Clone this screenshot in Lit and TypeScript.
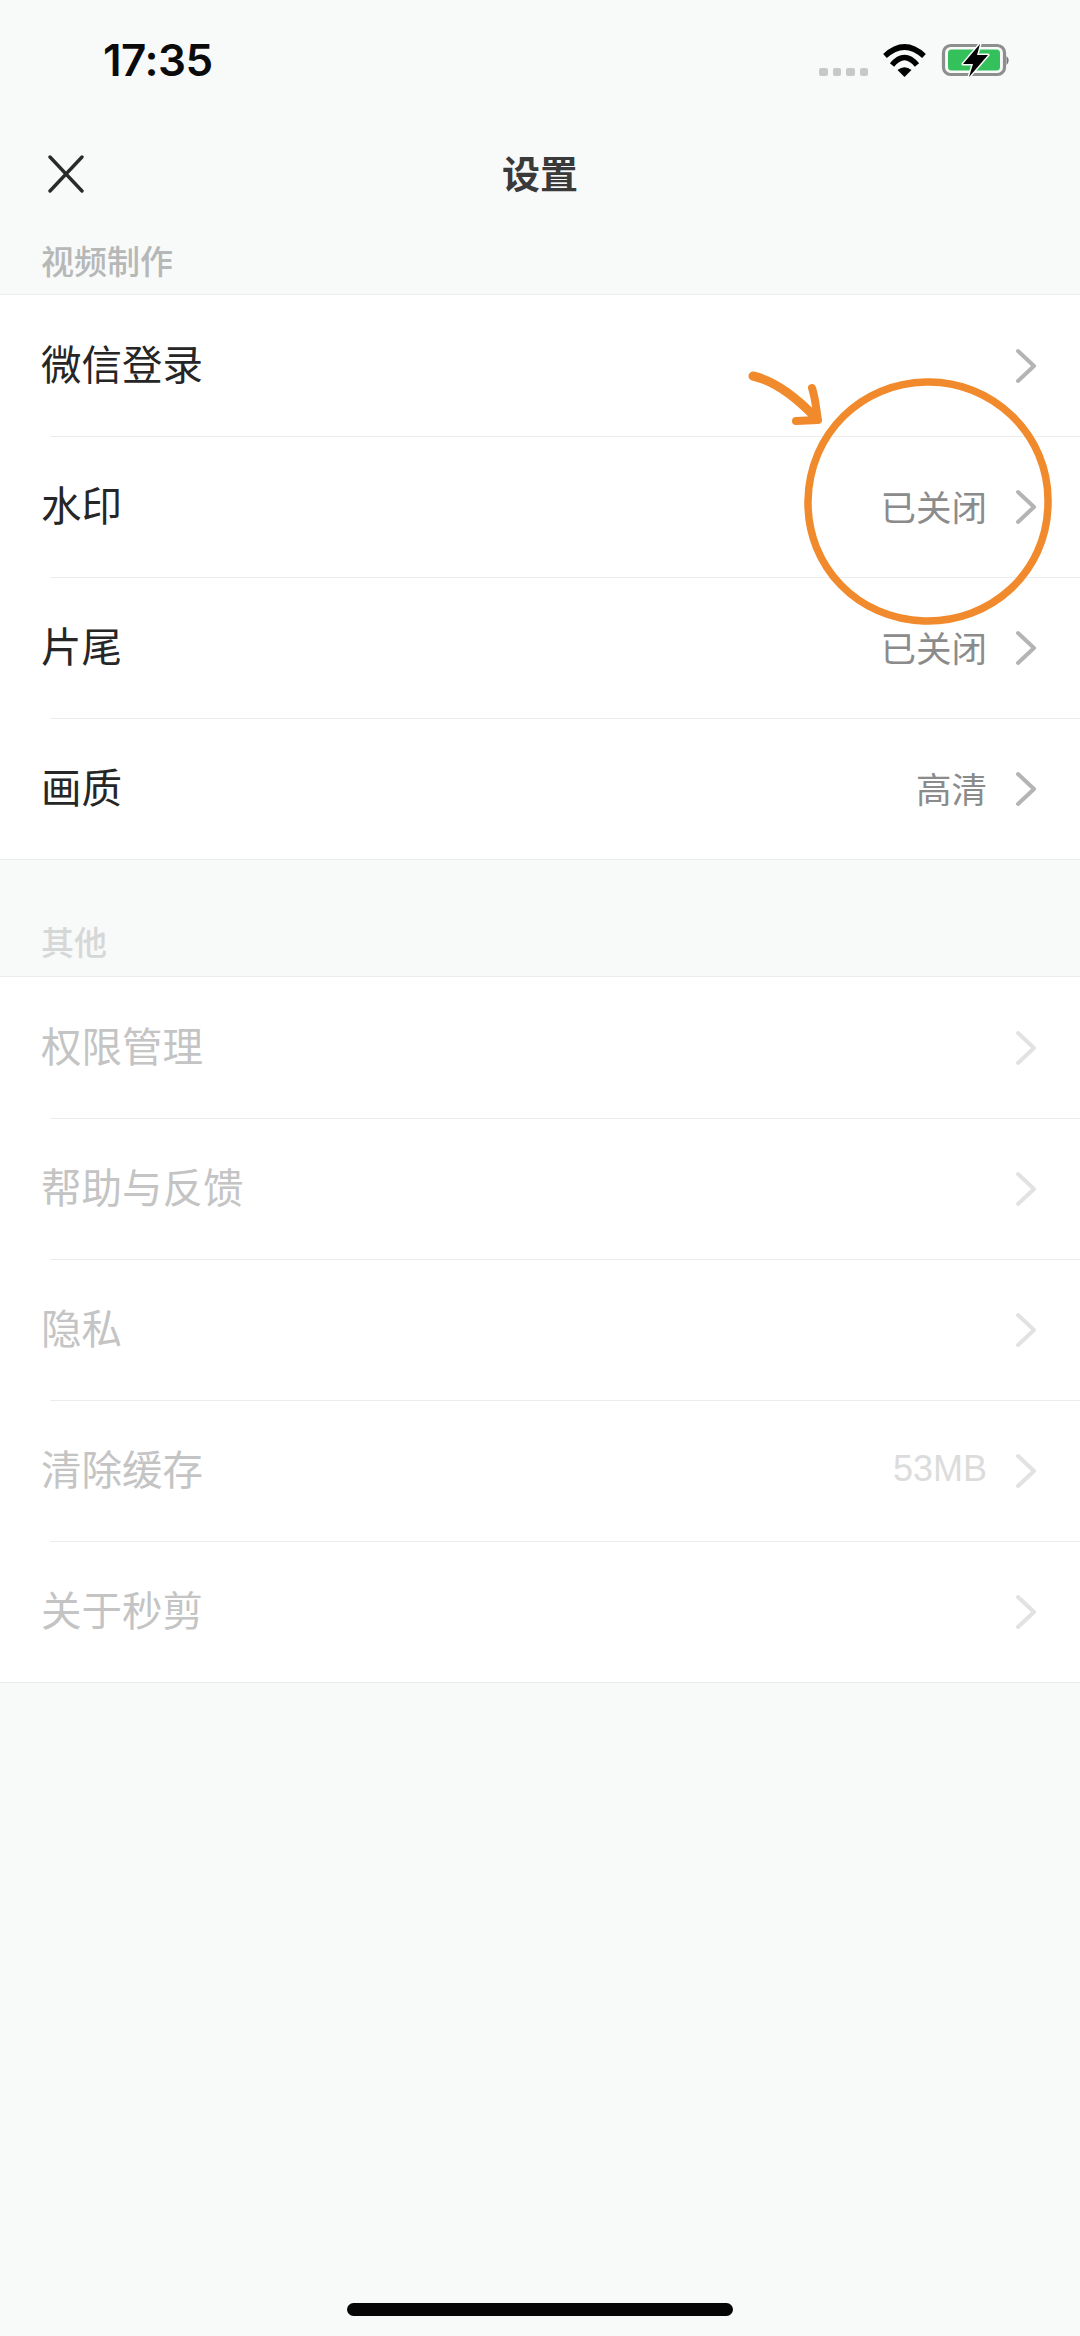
import { LitElement, html, css, svg } from "lit";
import { customElement } from "lit/decorators.js";

interface Row { label: string; value?: string }

const video: Row[] = [
  { label: "微信登录" },
  { label: "水印", value: "已关闭" },
  { label: "片尾", value: "已关闭" },
  { label: "画质", value: "高清" },
];
const other: Row[] = [
  { label: "权限管理" },
  { label: "帮助与反馈" },
  { label: "隐私" },
  { label: "清除缓存", value: "53MB" },
  { label: "关于秒剪" },
];

@customElement("app-root")
export class AppRoot extends LitElement {
  static styles = css`
    :host {
      display: block;
      position: relative;
      width: 1080px;
      height: 2336px;
      overflow: hidden;
      background: #f8f9f9;
      font-family: "Liberation Sans", "Noto Sans CJK SC", sans-serif;
    }
    .status {
      height: 122px;
      display: flex;
      align-items: center;
      justify-content: space-between;
      padding: 0 51px 2px 103px;
      box-sizing: border-box;
    }
    .time {
      font-family: Inter, sans-serif;
      font-weight: 600;
      font-size: 44px;
      letter-spacing: -0.5px;
      color: #0b0b0b;
    }
    .status-icons { display: flex; align-items: center; }
    .nav {
      height: 102px;
      padding-bottom: 3px;
      box-sizing: border-box;
      display: flex;
      align-items: center;
      justify-content: center;
      position: relative;
    }
    .close { position: absolute; left: 48px; top: 33px; }
    .title {
      font-family: "Noto Sans CJK SC", sans-serif;
      font-size: 38px;
      font-weight: 700;
      color: #3a3a3a;
    }
    .head {
      height: 70px;
      padding: 0 0 0 41px;
      font-family: "Noto Sans CJK SC", sans-serif;
      font-size: 33px;
      font-weight: 500;
      line-height: 72px;
      color: #b6b8b8;
    }
    .head.dim { color: #d6d8d8; height: 69px; line-height: 69px; }
    .group {
      background: #fff;
      border-top: 1px solid #ebecec;
      border-bottom: 1px solid #ebecec;
    }
    .gap { height: 47px; }
    .row {
      height: 141px;
      box-sizing: border-box;
      display: flex;
      align-items: center;
      padding: 0 43px 0 41px;
      position: relative;
      font-family: "Noto Sans CJK SC", sans-serif;
    }
    .row + .row::before {
      content: "";
      position: absolute;
      top: 0;
      left: 50px;
      right: 0;
      height: 1px;
      background: #ebecec;
    }
    .label { flex: 1; font-size: 40.5px; color: #262626; margin-bottom: 6px; }
    .value { font-size: 35.5px; color: #8b8b8b; margin: 0 28px 3px 0; }
    .chev { display: block; stroke: #b4b4b4; }
    .dim .label { color: #c4c4c4; margin-bottom: 7px; }
    .dim .value { color: #dcdcdc; font-family: "Liberation Sans", sans-serif; font-size: 36px; margin-right: 28px; }
    .dim .chev { stroke: #e2e2e2; }
    .home {
      position: absolute;
      left: 347px;
      top: 2303px;
      width: 386px;
      height: 13px;
      border-radius: 6.5px;
      background: #050505;
    }
    .mark { position: absolute; left: 0; top: 0; pointer-events: none; }
  `;

  private chevron() {
    return html`<svg class="chev" width="22" height="36" viewBox="0 0 22 36" fill="none" stroke-width="4" stroke-linecap="round" stroke-linejoin="round">
      <path d="M3 3 L19 18 L3 33" />
    </svg>`;
  }

  private row(r: Row) {
    return html`<div class="row">
      <span class="label">${r.label}</span>
      ${r.value ? html`<span class="value">${r.value}</span>` : ""}
      ${this.chevron()}
    </div>`;
  }

  render() {
    return html`
      <div class="status">
        <span class="time">17:35</span>
        <svg class="status-icons" width="210" height="36" viewBox="0 0 210 36">
          <g fill="#c8c8c8">
            <rect x="0" y="26" width="9" height="8" rx="2"/>
            <rect x="14" y="26" width="8" height="8" rx="2"/>
            <rect x="27" y="26" width="9" height="8" rx="2"/>
            <rect x="41" y="26" width="8" height="8" rx="2"/>
          </g>
          <g fill="none" stroke="#000" stroke-width="5.5">
            <path d="M66 14 Q85.5 -4 105 14"/>
            <path d="M73 23 Q85.5 8 98 23"/>
          </g>
          <path d="M78.5 28 Q85.5 22.5 92.5 28 L85.5 35 Z" fill="#000"/>
          <rect x="124.5" y="3.5" width="61" height="29" rx="7" fill="none" stroke="#8e8e8e" stroke-width="3.2"/>
          <rect x="129" y="7.5" width="52" height="21" rx="3.5" fill="#34c15c"/>
          <path d="M187.5 14 Q192 18 187.5 23 Z" fill="#777"/>
          <path d="M161 2 L144 22 L154 22 L150 35 L169 13 L158 13 Z" fill="#000" stroke="#f8f9f9" stroke-width="3" paint-order="stroke" stroke-linejoin="round"/>
        </svg>
      </div>
      <div class="nav">
        <svg class="close" width="36" height="38" viewBox="0 0 36 38" fill="none" stroke="#2a2a2a" stroke-width="3.4" stroke-linecap="round">
          <path d="M2 2 L34 36 M34 2 L2 36"/>
        </svg>
        <span class="title">设置</span>
      </div>
      <div class="head">视频制作</div>
      <div class="group">${video.map((r) => this.row(r))}</div>
      <div class="gap"></div>
      <div class="head dim">其他</div>
      <div class="group dim">${other.map((r) => this.row(r))}</div>
      <div class="home"></div>
      <svg class="mark" width="1080" height="700" viewBox="0 0 1080 700" fill="none" stroke="#f08a2c" stroke-linecap="round" stroke-linejoin="round">
        ${svg`
          <path stroke-width="7.5" d="M926 382 C 990 380 1050 433 1048 504 C 1047 573 990 623 924 621 C 858 619 807 567 808 501 C 809 433 862 383 926 382 Z"/>
          <path stroke-width="9" d="M753 376 C 775 381 797 398 816 418"/>
          <path stroke-width="8" d="M812 388 C 816 400 816 410 818 420 L 796 421"/>
        `}
      </svg>
    `;
  }
}
